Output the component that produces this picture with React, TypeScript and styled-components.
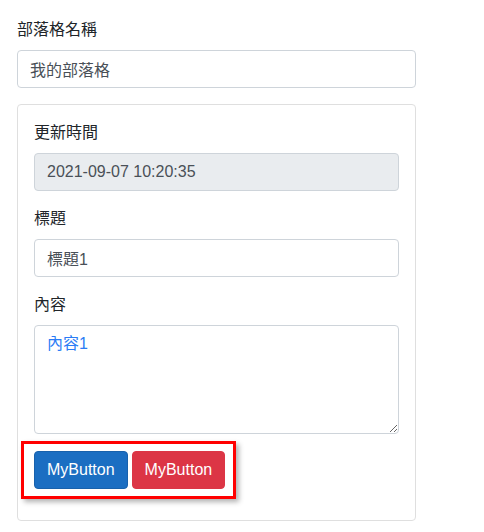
import React from 'react';
import styled, { createGlobalStyle } from 'styled-components';

const GlobalStyle = createGlobalStyle`
  * {
    box-sizing: border-box;
  }
  body {
    margin: 0;
    background: #fff;
    color: #212529;
    font-family: 'Liberation Sans', 'Noto Sans CJK TC', sans-serif;
    font-size: 16px;
    line-height: 1.5;
  }
`;

const Page = styled.div`
  width: 433px;
  padding: 18px 17px 0;
`;

const FormGroup = styled.div<{ $mb?: number }>`
  display: flex;
  flex-direction: column;
  margin-bottom: ${(p) => p.$mb ?? 16}px;
`;

const Label = styled.label`
  display: block;
  height: 24px;
  line-height: 24px;
  margin-bottom: 8px;
  color: #212529;
`;

const Input = styled.input`
  display: block;
  width: 100%;
  height: 38px;
  padding: 6px 12px;
  font: inherit;
  font-size: 16px;
  line-height: 24px;
  color: #495057;
  background-color: #fff;
  border: 1px solid #ced4da;
  border-radius: 4px;
  outline: none;
  &:read-only[data-disabled='true'] {
    background-color: #e9ecef;
  }
`;

const TextArea = styled.textarea`
  display: block;
  width: 100%;
  height: 109px;
  padding: 6px 12px;
  font: inherit;
  font-size: 16px;
  line-height: 24px;
  color: #2b7cf5;
  background-color: #fff;
  border: 1px solid #ced4da;
  border-radius: 4px;
  outline: none;
  resize: vertical;
`;

const Card = styled.div`
  border: 1px solid #dfdfdf;
  border-radius: 4px;
  padding: 16px 16px 16px;
`;

const ButtonBox = styled.div`
  display: inline-flex;
  gap: 4px;
  margin: 7px 0 5px -13px;
  padding: 7px 8px 7px 10px;
  border: 3px solid #ff0000;
  box-shadow: 3px 3px 5px rgba(0, 0, 0, 0.3);
`;

const Button = styled.button<{ $variant: 'primary' | 'danger' }>`
  height: 38px;
  padding: 6px 12px;
  font: inherit;
  font-size: 16px;
  line-height: 24px;
  color: #fff;
  border-radius: 4px;
  border: 1px solid
    ${(p) => (p.$variant === 'primary' ? '#1861ac' : '#dc3545')};
  background-color: ${(p) =>
    p.$variant === 'primary' ? '#1b6ec2' : '#dc3545'};
  cursor: pointer;
`;

export default function App() {
  return (
    <>
      <GlobalStyle />
      <Page>
        <FormGroup>
          <Label>部落格名稱</Label>
          <Input defaultValue="我的部落格" />
        </FormGroup>
        <Card>
          <FormGroup>
            <Label>更新時間</Label>
            <Input readOnly data-disabled="true" value="2021-09-07 10:20:35" />
          </FormGroup>
          <FormGroup>
            <Label>標題</Label>
            <Input defaultValue="標題1" />
          </FormGroup>
          <FormGroup $mb={0}>
            <Label>內容</Label>
            <TextArea defaultValue="內容1" />
          </FormGroup>
          <ButtonBox>
            <Button $variant="primary">MyButton</Button>
            <Button $variant="danger">MyButton</Button>
          </ButtonBox>
        </Card>
      </Page>
    </>
  );
}
